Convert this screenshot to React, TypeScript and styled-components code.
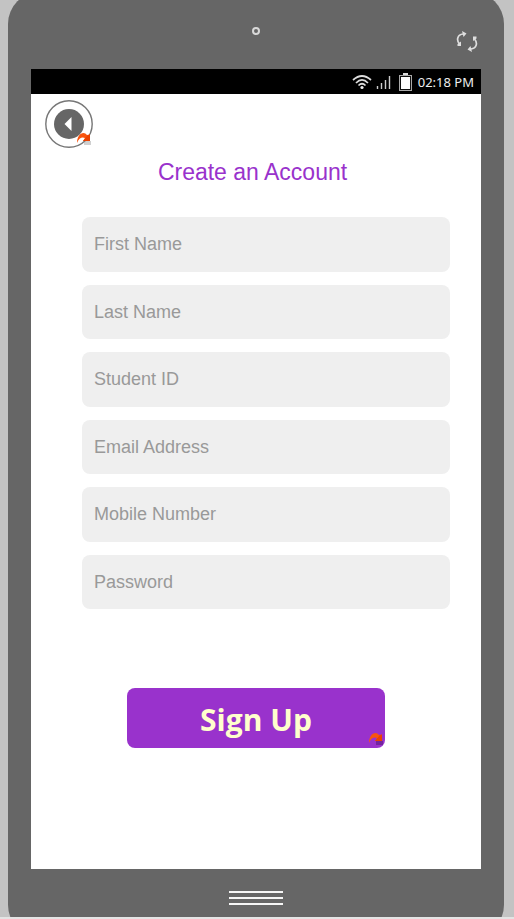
import React from 'react';
import styled, { createGlobalStyle } from 'styled-components';

const GlobalStyle = createGlobalStyle`
  *, *::before, *::after { box-sizing: border-box; }
  body { margin: 0; background: #c3c3c3; font-family: "Liberation Sans", Arial, sans-serif; }
  button, input { font: inherit; border: 0; margin: 0; }
`;

const Page = styled.div`
  display: flex;
  min-height: 100vh;
  padding: 0 10px 0 8px;
  overflow: hidden;
  background: #c3c3c3;
  border-bottom: 2px solid #e4e4e4;
`;

const Phone = styled.div`
  display: flex;
  flex: 1;
  flex-direction: column;
  margin: -8px 0 -20px;
  padding: 8px 23px 20px;
  background: #666;
  border-radius: 32px;
`;

const Bezel = styled.header`
  display: grid;
  grid-template-columns: 1fr auto 1fr;
  height: 69px;
`;

const Camera = styled.span`
  grid-column: 2;
  width: 8px;
  height: 8px;
  margin-top: 27px;
  border: 2px solid #d8d8d8;
  border-radius: 50%;
`;

const RotateButton = styled.button`
  display: flex;
  justify-self: end;
  align-self: start;
  margin: 31px 3px 0 0;
  padding: 0;
  background: none;
`;

const Screen = styled.div`
  display: flex;
  flex: 1;
  flex-direction: column;
  background: #fff;
`;

const StatusBar = styled.div`
  display: flex;
  align-items: center;
  justify-content: flex-end;
  height: 25px;
  padding-right: 7px;
  background: #000;
  color: #eee;
  font: 13px/24px "Noto Sans", "Open Sans", sans-serif;
`;

const StatusIcons = styled.svg`
  display: block;
  margin-right: 5px;
`;

const Content = styled.main`
  display: flex;
  flex: 1;
  flex-direction: column;
  padding: 6px 14px 0;
`;

const BackButton = styled.button`
  position: relative;
  align-self: flex-start;
  width: 48px;
  height: 48px;
  padding: 0;
  background: none;

  svg { display: block; }
`;

const LinkBadge = styled.svg`
  position: absolute;
  right: 1px;
  bottom: 2px;
`;

const Title = styled.h1`
  margin: 10px 0 0;
  padding-right: 7px;
  color: #9932cc;
  font-size: 23px;
  font-weight: 400;
  line-height: 28px;
  text-align: center;
`;

const Form = styled.form`
  display: flex;
  flex-direction: column;
  margin: 31px 17px 0 37px;
`;

const FieldList = styled.div`
  display: grid;
  grid-auto-rows: 1fr;
  gap: 13px;
  height: 392px;
`;

const Field = styled.input`
  width: 100%;
  min-height: 0;
  padding: 1px 12px 0;
  border-radius: 8px;
  background: #efefef;
  color: #333;
  font-size: 18px;

  &::placeholder { color: #999; opacity: 1; }
`;

const SubmitButton = styled.button`
  position: relative;
  height: 60px;
  margin: 79px 65px 0 45px;
  padding: 4px 0 0;
  border-radius: 8px;
  background: #9932cc;
  color: #ffffcc;
  font: 700 30px/40px "Open Sans", "Noto Sans", sans-serif;
`;

const HomeBezel = styled.footer`
  display: flex;
  justify-content: center;
  height: 48px;
  padding-top: 22px;
`;

const HomeButton = styled.button`
  display: flex;
  flex-direction: column;
  gap: 4px;
  width: 54px;
  padding: 0;
  background: none;
`;

const Bar = styled.span`
  height: 2px;
  background: #f6f6f6;
`;

const fields = [
  { label: 'First Name', type: 'text' },
  { label: 'Last Name', type: 'text' },
  { label: 'Student ID', type: 'text' },
  { label: 'Email Address', type: 'email' },
  { label: 'Mobile Number', type: 'tel' },
  { label: 'Password', type: 'password' },
];

function Badge({ shadow }: { shadow: string }) {
  return (
    <LinkBadge width="16" height="14" viewBox="0 0 16 14" aria-hidden="true">
      <path d="M8 9 H15 V13 H8 Z" fill={shadow} opacity="0.35" />
      <path d="M1 11 C1 5 4 1 7.5 1 Q9.5 1 11 3 L14 2.5 V9 H7 L9 6 C6 4.5 3 6 1 11 Z" fill="#f8540e" />
      <path d="M7 9 L11.5 3.5 L14 2.5 V9 Z" fill="#ea4100" />
    </LinkBadge>
  );
}

export default function App() {
  return (
    <>
      <GlobalStyle />
      <Page>
        <Phone>
          <Bezel>
            <Camera />
            <RotateButton type="button" aria-label="Rotate device">
              <svg width="22" height="21" viewBox="0 0 22 21" fill="none" stroke="#dedede" strokeWidth="1.7">
                <path d="M3.5 13 C0 9 1.5 3.5 7 3" />
                <path d="M6 0 L10.5 2.5 L7.5 6 Z" fill="#dedede" stroke="none" />
                <path d="M1.5 15 V13 L5 10.5 V15 Z" fill="#dedede" stroke="none" />
                <path d="M18.5 8 C22 12 20.5 17.5 15 18" />
                <path d="M16 21 L11.5 18.5 L14.5 15 Z" fill="#dedede" stroke="none" />
                <path d="M17 10 V5.5 H20.5 V7.5 Z" fill="#dedede" stroke="none" />
              </svg>
            </RotateButton>
          </Bezel>
          <Screen>
            <StatusBar>
              <StatusIcons width="61" height="20" viewBox="0 0 61 20" role="img" aria-label="Wi-Fi, signal and battery">
                <g fill="none" stroke="#ddd" strokeWidth="1.7">
                  <path d="M1 8 Q10 0 19 8" />
                  <path d="M4 11 Q10 5 16 11" />
                  <path d="M6.5 13.5 Q10 10 13.5 13.5" />
                </g>
                <circle cx="10" cy="15.5" r="1.6" fill="#eee" />
                <path d="M25.5 17V14 M29.5 17V11 M33.5 17V8 M37.5 17V4" stroke="#ccc" strokeWidth="1.4" />
                <rect x="47.5" y="3.5" width="12" height="15" fill="#111" stroke="#aaa" />
                <rect x="49" y="5" width="9" height="12" fill="#fff" />
                <rect x="51" y="1" width="5" height="2" fill="#ddd" />
              </StatusIcons>
              <time>02:18 PM</time>
            </StatusBar>
            <Content>
              <BackButton type="button" aria-label="Back">
                <svg width="48" height="48" viewBox="0 0 48 48">
                  <circle cx="24" cy="24" r="23.2" fill="#fff" stroke="#777" strokeWidth="1.4" />
                  <circle cx="24" cy="24" r="15" fill="#666" />
                  <path d="M19.5 24 L26.5 17 V31 Z" fill="#fff" />
                </svg>
                <Badge shadow="#777" />
              </BackButton>
              <Title>Create an Account</Title>
              <Form onSubmit={(event) => event.preventDefault()}>
                <FieldList>
                  {fields.map(({ label, type }) => (
                    <Field key={label} type={type} placeholder={label} aria-label={label} />
                  ))}
                </FieldList>
                <SubmitButton type="submit">
                  Sign Up
                  <Badge shadow="#2f0f44" />
                </SubmitButton>
              </Form>
            </Content>
          </Screen>
          <HomeBezel>
            <HomeButton type="button" aria-label="Home">
              <Bar />
              <Bar />
              <Bar />
            </HomeButton>
          </HomeBezel>
        </Phone>
      </Page>
    </>
  );
}
